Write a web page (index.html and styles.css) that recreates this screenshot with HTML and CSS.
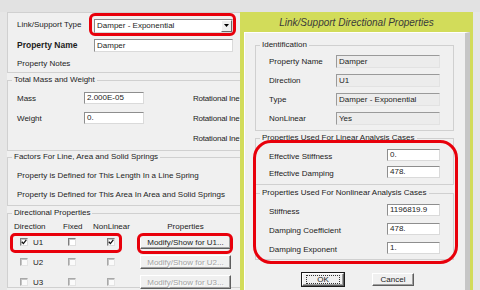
FILE: index.html
```html
<!doctype html>
<html lang="en">
  <head>
    <meta charset="UTF-8" />
    <title>Link/Support Property Data</title>
    <link rel="stylesheet" href="styles.css">
  </head>
  <body>
    <div class="topbar"></div>
    <div class="main">
      <!-- main property dialog (partly covered) -->
      <div class="left">
        <div class="box top-box">
          <div class="row row-type">
            <span class="lbl">Link/Support Type</span>
            <div class="combo">
              <span>Damper - Exponential</span>
              <span class="combo-btn">
                <svg width="5" height="3" viewBox="0 0 5 3"><path d="M0 0H5L2.5 3Z" fill="#000"/></svg>
              </span>
            </div>
          </div>
          <div class="row row-name">
            <span class="lbl bold">Property Name</span>
            <div class="field wide">Damper</div>
          </div>
          <div class="row row-notes">
            <span class="lbl">Property Notes</span>
          </div>
        </div>

        <fieldset class="box mass-box">
          <legend>Total Mass and Weight</legend>
          <div class="mass-grid">
            <span>Mass</span><div class="field small">2.000E-05</div><span></span><span class="rot">Rotational Ine</span>
            <span>Weight</span><div class="field small">0.</div><span></span><span class="rot">Rotational Ine</span>
            <span></span><span></span><span></span><span class="rot">Rotational Ine</span>
          </div>
        </fieldset>

        <fieldset class="box factor-box">
          <legend>Factors For Line, Area and Solid Springs</legend>
          <div class="factor-line">Property is Defined for This Length In a Line Spring</div>
          <div class="factor-line">Property is Defined for This Area In Area and Solid Springs</div>
        </fieldset>

        <fieldset class="box dir-box">
          <legend>Directional Properties</legend>
          <div class="dir-grid">
            <span class="hd">Direction</span>
            <span class="hd">Fixed</span>
            <span class="hd">NonLinear</span>
            <span class="hd center">Properties</span>

            <div class="cell cell-dir"><span class="chk"><svg width="6" height="6" viewBox="0 0 6 6"><path d="M0.8 2.8L2.4 4.6L5.3 0.9" fill="none" stroke="#111" stroke-width="1.3"/></svg></span>U1</div>
            <div class="cell cell-fixed"><span class="chk"></span></div>
            <div class="cell cell-nl"><span class="chk"><svg width="6" height="6" viewBox="0 0 6 6"><path d="M0.8 2.8L2.4 4.6L5.3 0.9" fill="none" stroke="#111" stroke-width="1.3"/></svg></span></div>
            <div class="cell"><span class="btn modify">Modify/Show for U1...</span></div>

            <div class="cell cell-dir"><span class="chk off"></span>U2</div>
            <div class="cell cell-fixed"><span class="chk off"></span></div>
            <div class="cell cell-nl"><span class="chk off"></span></div>
            <div class="cell"><span class="btn modify disabled">Modify/Show for U2...</span></div>

            <div class="cell cell-dir"><span class="chk off"></span>U3</div>
            <div class="cell cell-fixed"><span class="chk off"></span></div>
            <div class="cell cell-nl"><span class="chk off"></span></div>
            <div class="cell"><span class="btn modify disabled">Modify/Show for U3...</span></div>
          </div>
        </fieldset>
      </div>

      <!-- directional properties dialog -->
      <div class="right">
        <div class="title">Link/Support Directional Properties</div>
        <div class="inner">
          <fieldset class="rbox id-box">
            <legend>Identification</legend>
            <div class="id-grid">
              <span>Property Name</span><div class="field ro">Damper</div>
              <span>Direction</span><div class="field ro">U1</div>
              <span>Type</span><div class="field ro">Damper - Exponential</div>
              <span>NonLinear</span><div class="field ro">Yes</div>
            </div>
          </fieldset>

          <fieldset class="rbox lin-box">
            <legend>Properties Used For Linear Analysis Cases</legend>
            <div class="val-grid lin-grid">
              <span class="vlbl">Effective Stiffness</span><div class="field num">0.</div>
              <span class="vlbl">Effective Damping</span><div class="field num">478.</div>
            </div>
          </fieldset>

          <fieldset class="rbox nl-box">
            <legend>Properties Used For Nonlinear Analysis Cases</legend>
            <div class="val-grid nl-grid">
              <span class="vlbl">Stiffness</span><div class="field num">1196819.9</div>
              <span class="vlbl">Damping Coefficient</span><div class="field num">478.</div>
              <span class="vlbl">Damping Exponent</span><div class="field num">1.</div>
            </div>
          </fieldset>

          <div class="buttons">
            <span class="btn default"><span class="focus">OK</span></span>
            <span class="btn">Cancel</span>
          </div>
        </div>
      </div>
    </div>

    <!-- red annotation marks -->
    <div class="mark mark-type"></div>
    <div class="mark mark-u1"></div>
    <div class="mark mark-btn"></div>
    <div class="mark mark-props"></div>
  </body>
</html>
```

FILE: styles.css
```css
* {
  margin: 0;
  padding: 0;
  box-sizing: border-box;
}

body {
  width: 480px;
  height: 290px;
  overflow: hidden;
  position: relative;
  background: #e6e6e6;
  font-family: "Liberation Sans", Arial, sans-serif;
  font-size: 8px;
  color: #1c1c1c;
}

.topbar {
  height: 12px;
  background: #e2e2e2;
}

.main {
  display: flex;
  height: 278px;
}

/* left dialog */

.left {
  width: 233px;
  margin-left: 7px;
  background: #f0f0f0;
  overflow: hidden;
}

.box {
  width: 260px;
  border: 1px solid #d0d0d0;
}

fieldset {
  min-width: 0;
}

legend {
  margin-left: 4px;
  padding: 0 2px;
  line-height: 10px;
}

.top-box {
  height: 61px;
  padding-left: 9px;
}

.row {
  display: flex;
  align-items: center;
}

.row-type {
  height: 23px;
}

.row-name,
.row-notes {
  height: 18px;
}

.lbl {
  width: 77px;
}

.bold {
  font-weight: bold;
  font-size: 8.5px;
}

.combo {
  width: 139px;
  height: 14px;
  margin-top: 2px;
  background: #fff;
  border: 1px solid;
  border-color: #8a8a8a #d8d8d8 #d8d8d8 #8a8a8a;
  display: flex;
  align-items: center;
  justify-content: space-between;
  padding-left: 2px;
}

.combo-btn {
  width: 11px;
  height: 12px;
  background: #f0f0f0;
  border: 1px solid;
  border-color: #fff #6a6a6a #6a6a6a #fff;
  display: flex;
  align-items: center;
  justify-content: center;
}

.field {
  height: 13px;
  background: #fff;
  border: 1px solid;
  border-color: #8e8e8e #dadada #dadada #8e8e8e;
  padding-left: 2px;
  line-height: 11px;
  white-space: nowrap;
  overflow: hidden;
}

.field.wide {
  width: 139px;
}

.field.small {
  width: 60px;
  height: 12px;
  line-height: 10px;
}

.mass-box {
  margin-top: 2px;
  padding: 3px 0 2px 0;
}

.mass-grid {
  display: grid;
  grid-template-columns: 67px 60px 49px auto;
  grid-auto-rows: 20px;
  align-items: center;
  padding-left: 9px;
}

.rot {
  white-space: nowrap;
  letter-spacing: -0.2px;
}

.factor-box {
  margin-top: 1px;
  padding: 4px 0 1px 0;
}

.factor-line {
  height: 19px;
  line-height: 19px;
  padding-left: 9px;
}

.dir-box {
  margin-top: 2px;
  height: 80px;
}

.dir-grid {
  display: grid;
  grid-template-columns: 49px 30px 47px 91px;
  grid-template-rows: 14px 20px 20px 20px;
  padding-left: 6px;
}

.hd {
  align-self: end;
  line-height: 10px;
}

.center {
  text-align: center;
}

.cell {
  display: flex;
  align-items: center;
}

.cell-dir {
  padding-left: 6px;
  gap: 5px;
}

.cell-fixed {
  padding-left: 5px;
}

.cell-nl {
  padding-left: 14px;
}

.chk {
  width: 8px;
  height: 8px;
  background: #fff;
  border: 1px solid;
  border-color: #7c7c7c #dedede #dedede #7c7c7c;
  box-shadow: inset 1px 1px #c4c4c4;
  display: inline-flex;
  align-items: center;
  justify-content: center;
}

.chk.off {
  background: #fafafa;
  border-color: #a8a8a8 #e4e4e4 #e4e4e4 #a8a8a8;
}

/* buttons */

.btn {
  display: inline-flex;
  align-items: center;
  justify-content: center;
  height: 13px;
  width: 42px;
  background: #f0f0f0;
  border: 1px solid;
  border-color: #fff #5e5e5e #5e5e5e #fff;
  box-shadow: inset -1px -1px #a0a0a0;
  white-space: nowrap;
}

.btn.modify {
  width: 91px;
  height: 14px;
}

.btn.disabled {
  color: #a3a3a3;
  text-shadow: 1px 1px #fff;
}

.btn.default {
  outline: 1px solid #1a1a1a;
}

.focus {
  border: 1px dotted #333;
  width: 34px;
  height: 9px;
  display: flex;
  align-items: center;
  justify-content: center;
}

/* right dialog */

.right {
  width: 233px;
  background: #d2dc5a;
  display: flex;
  flex-direction: column;
}

.title {
  height: 20px;
  display: flex;
  align-items: center;
  justify-content: center;
  font-style: italic;
  font-size: 10px;
  color: #3a3a3a;
}

.inner {
  flex: 1;
  margin: 0 3px 0 4px;
  background: #f0f0f0;
  border-top: 1px solid #fff;
  border-left: 1px solid #fff;
  border-right: 5px solid #c6c6c6;
  padding-top: 7px;
}

.rbox {
  margin-left: 10px;
  width: 199px;
  border: 1px solid #d0d0d0;
}

.id-box {
  padding: 2px 0 2px 0;
}

.id-grid {
  display: grid;
  grid-template-columns: 67px 104px;
  grid-auto-rows: 19px;
  align-items: center;
  padding-left: 13px;
}

.field.ro {
  background: #ececec;
  border-color: #9a9a9a #e2e2e2 #e2e2e2 #9a9a9a;
}

.lin-box {
  margin-top: 2px;
  padding: 3px 0 4px 0;
}

.nl-box {
  margin-top: 3px;
  padding: 2px 0 2px 0;
}

.val-grid {
  display: grid;
  grid-template-columns: 118px 53px;
  align-items: center;
  padding-left: 13px;
}

.lin-grid {
  grid-auto-rows: 17px;
}

.nl-grid {
  grid-auto-rows: 19px;
}

.vlbl {
  padding-top: 4px;
}

.field.num {
  height: 12px;
  line-height: 10px;
}

.buttons {
  display: flex;
  gap: 28px;
  margin-top: 13px;
  padding-left: 57px;
}

/* annotation marks */

.mark {
  position: absolute;
  border: 3px solid #e8000b;
  border-radius: 6px;
}

.mark-type {
  left: 89px;
  top: 13px;
  width: 147px;
  height: 23px;
}

.mark-u1 {
  left: 10px;
  top: 233px;
  width: 112px;
  height: 20px;
  border-radius: 5px;
}

.mark-btn {
  left: 137px;
  top: 233px;
  width: 96px;
  height: 21px;
}

.mark-props {
  left: 253px;
  top: 140px;
  width: 205px;
  height: 124px;
  border-radius: 18px;
}
```
